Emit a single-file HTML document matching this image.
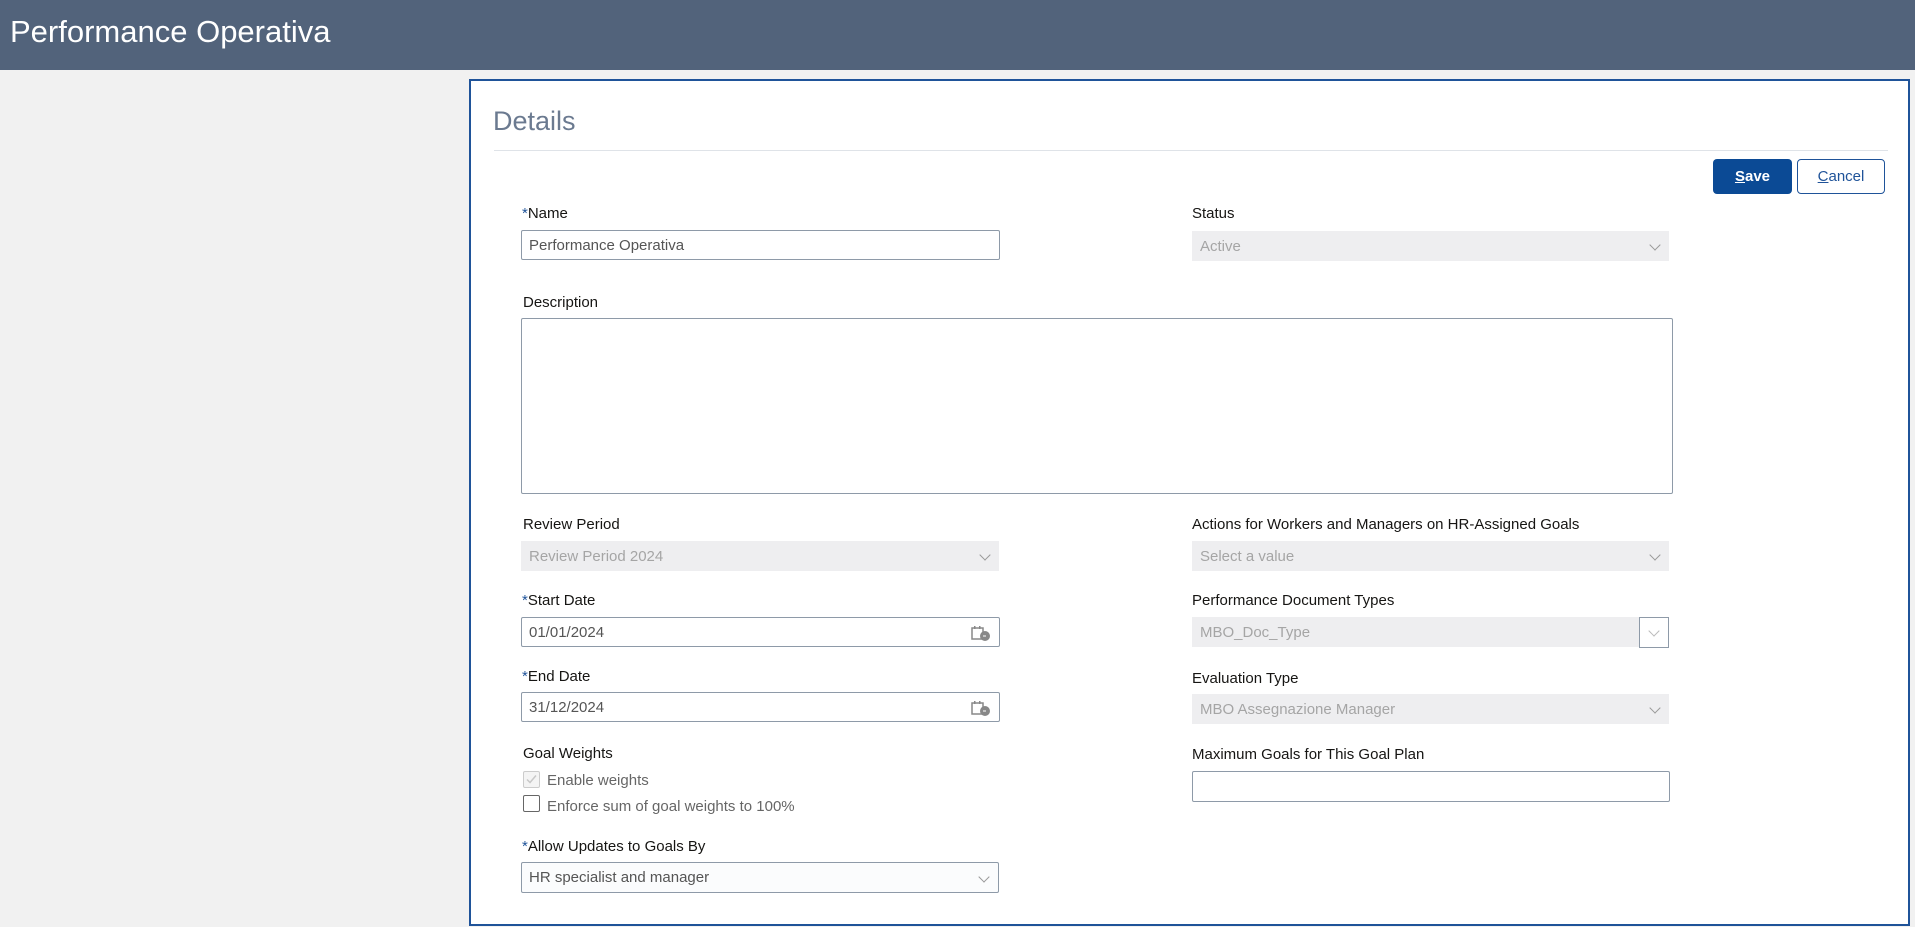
<!DOCTYPE html>
<html><head><meta charset="utf-8"><style>
*{margin:0;padding:0;box-sizing:border-box}
body{width:1915px;height:927px;background:#f1f1f1;font-family:"Liberation Sans",sans-serif;position:relative;overflow:hidden}
.hdr{position:absolute;left:0;top:0;width:1915px;height:70px;background:#52637b}
.hdr span{position:absolute;left:10px;top:14px;font-size:31px;color:#fff;font-weight:300}
.panel{position:absolute;left:469px;top:79px;width:1441px;height:847px;background:#fff;border:2px solid #1f5399}
.a{position:absolute}
.title{left:493px;top:106px;font-size:27px;color:#6b7a90}
.div{left:494px;top:150px;width:1394px;height:1px;background:#dfe3e8}
.btn{position:absolute;height:35px;border-radius:4px;font-size:15px;font-weight:bold;text-align:center;line-height:35px}
.lbl{position:absolute;font-size:15px;color:#161513}
.lbl i{color:#1f5399;font-style:normal}
.in{position:absolute;height:30px;border:1px solid #8e9aa8;border-radius:2px;background:#fff;font-size:15px;color:#555;line-height:30px;padding-left:7px}
.dis{position:absolute;height:30px;background:#eeeef0;font-size:15px;color:#a5a5a5;line-height:32px;padding-left:8px}
.chev{position:absolute;right:10px;top:10px;width:8px;height:8px;border-right:1px solid #999;border-bottom:1px solid #999;transform:rotate(45deg)}
.cb{position:absolute;width:17px;height:17px;border:1px solid #666;border-radius:2px;background:#fff}
.cal{position:absolute;right:8px;top:7px;width:20px;height:16px}
</style></head><body>
<div class="hdr"><span>Performance Operativa</span></div>
<div class="panel"></div>
<div class="a title">Details</div>
<div class="a div"></div>
<div class="btn" style="left:1713px;top:159px;width:79px;background:#0b4a95;color:#fff"><u>S</u>ave</div>
<div class="btn" style="left:1797px;top:159px;width:88px;border:1px solid #1f5399;color:#1f5399;background:#fff;font-weight:normal;line-height:33px"><u>C</u>ancel</div>

<div class="lbl" style="left:522px;top:205px"><i>*</i>Name</div>
<div class="in" style="left:521px;top:230px;width:479px">Performance Operativa</div>
<div class="lbl" style="left:1192px;top:205px">Status</div>
<div class="dis" style="left:1192px;top:231px;width:477px">Active<div class="chev"></div></div>

<div class="lbl" style="left:523px;top:294px">Description</div>
<div class="in" style="left:521px;top:318px;width:1152px;height:176px"></div>

<div class="lbl" style="left:523px;top:516px">Review Period</div>
<div class="dis" style="left:521px;top:541px;width:478px">Review Period 2024<div class="chev"></div></div>
<div class="lbl" style="left:1192px;top:516px">Actions for Workers and Managers on HR-Assigned Goals</div>
<div class="dis" style="left:1192px;top:541px;width:477px">Select a value<div class="chev"></div></div>

<div class="lbl" style="left:522px;top:592px"><i>*</i>Start Date</div>
<div class="in" style="left:521px;top:617px;width:479px">01/01/2024<svg class="cal" viewBox="0 0 20 16"><rect x="1" y="3" width="11" height="11" fill="none" stroke="#888" stroke-width="1.5"/><rect x="3" y="1" width="1.5" height="3" fill="#888"/><rect x="8" y="1" width="1.5" height="3" fill="#888"/><circle cx="14" cy="11" r="5" fill="#888"/><path d="M12 11h3" stroke="#fff"/></svg></div>
<div class="lbl" style="left:1192px;top:592px">Performance Document Types</div>
<div class="dis" style="left:1192px;top:617px;width:448px">MBO_Doc_Type</div>
<div class="a" style="left:1639px;top:617px;width:30px;height:31px;border:1px solid #8e9aa8;background:#fff"><div class="chev" style="right:10px;top:9px;border-color:#bbb"></div></div>

<div class="lbl" style="left:522px;top:668px"><i>*</i>End Date</div>
<div class="in" style="left:521px;top:692px;width:479px">31/12/2024<svg class="cal" viewBox="0 0 20 16"><rect x="1" y="3" width="11" height="11" fill="none" stroke="#888" stroke-width="1.5"/><rect x="3" y="1" width="1.5" height="3" fill="#888"/><rect x="8" y="1" width="1.5" height="3" fill="#888"/><circle cx="14" cy="11" r="5" fill="#888"/><path d="M12 11h3" stroke="#fff"/></svg></div>
<div class="lbl" style="left:1192px;top:670px">Evaluation Type</div>
<div class="dis" style="left:1192px;top:694px;width:477px">MBO Assegnazione Manager<div class="chev"></div></div>

<div class="lbl" style="left:523px;top:745px">Goal Weights</div>
<div class="cb" style="left:523px;top:771px;border-color:#ccc;background:#f4f4f4"><svg width="15" height="15" viewBox="0 0 15 15" style="position:absolute;left:0;top:0"><path d="M3 7.5l3 3 6-7" fill="none" stroke="#c8c8c8" stroke-width="1.5"/></svg></div>
<div class="lbl" style="left:547px;top:772px;color:#666">Enable weights</div>
<div class="cb" style="left:523px;top:795px"></div>
<div class="lbl" style="left:547px;top:798px;color:#666">Enforce sum of goal weights to 100%</div>
<div class="lbl" style="left:1192px;top:746px">Maximum Goals for This Goal Plan</div>
<div class="in" style="left:1192px;top:771px;width:478px;height:31px"></div>

<div class="lbl" style="left:522px;top:838px"><i>*</i>Allow Updates to Goals By</div>
<div class="in" style="left:521px;top:862px;width:478px;height:31px;background:#fbfcfd">HR specialist and manager<div class="chev"></div></div>
</body></html>
